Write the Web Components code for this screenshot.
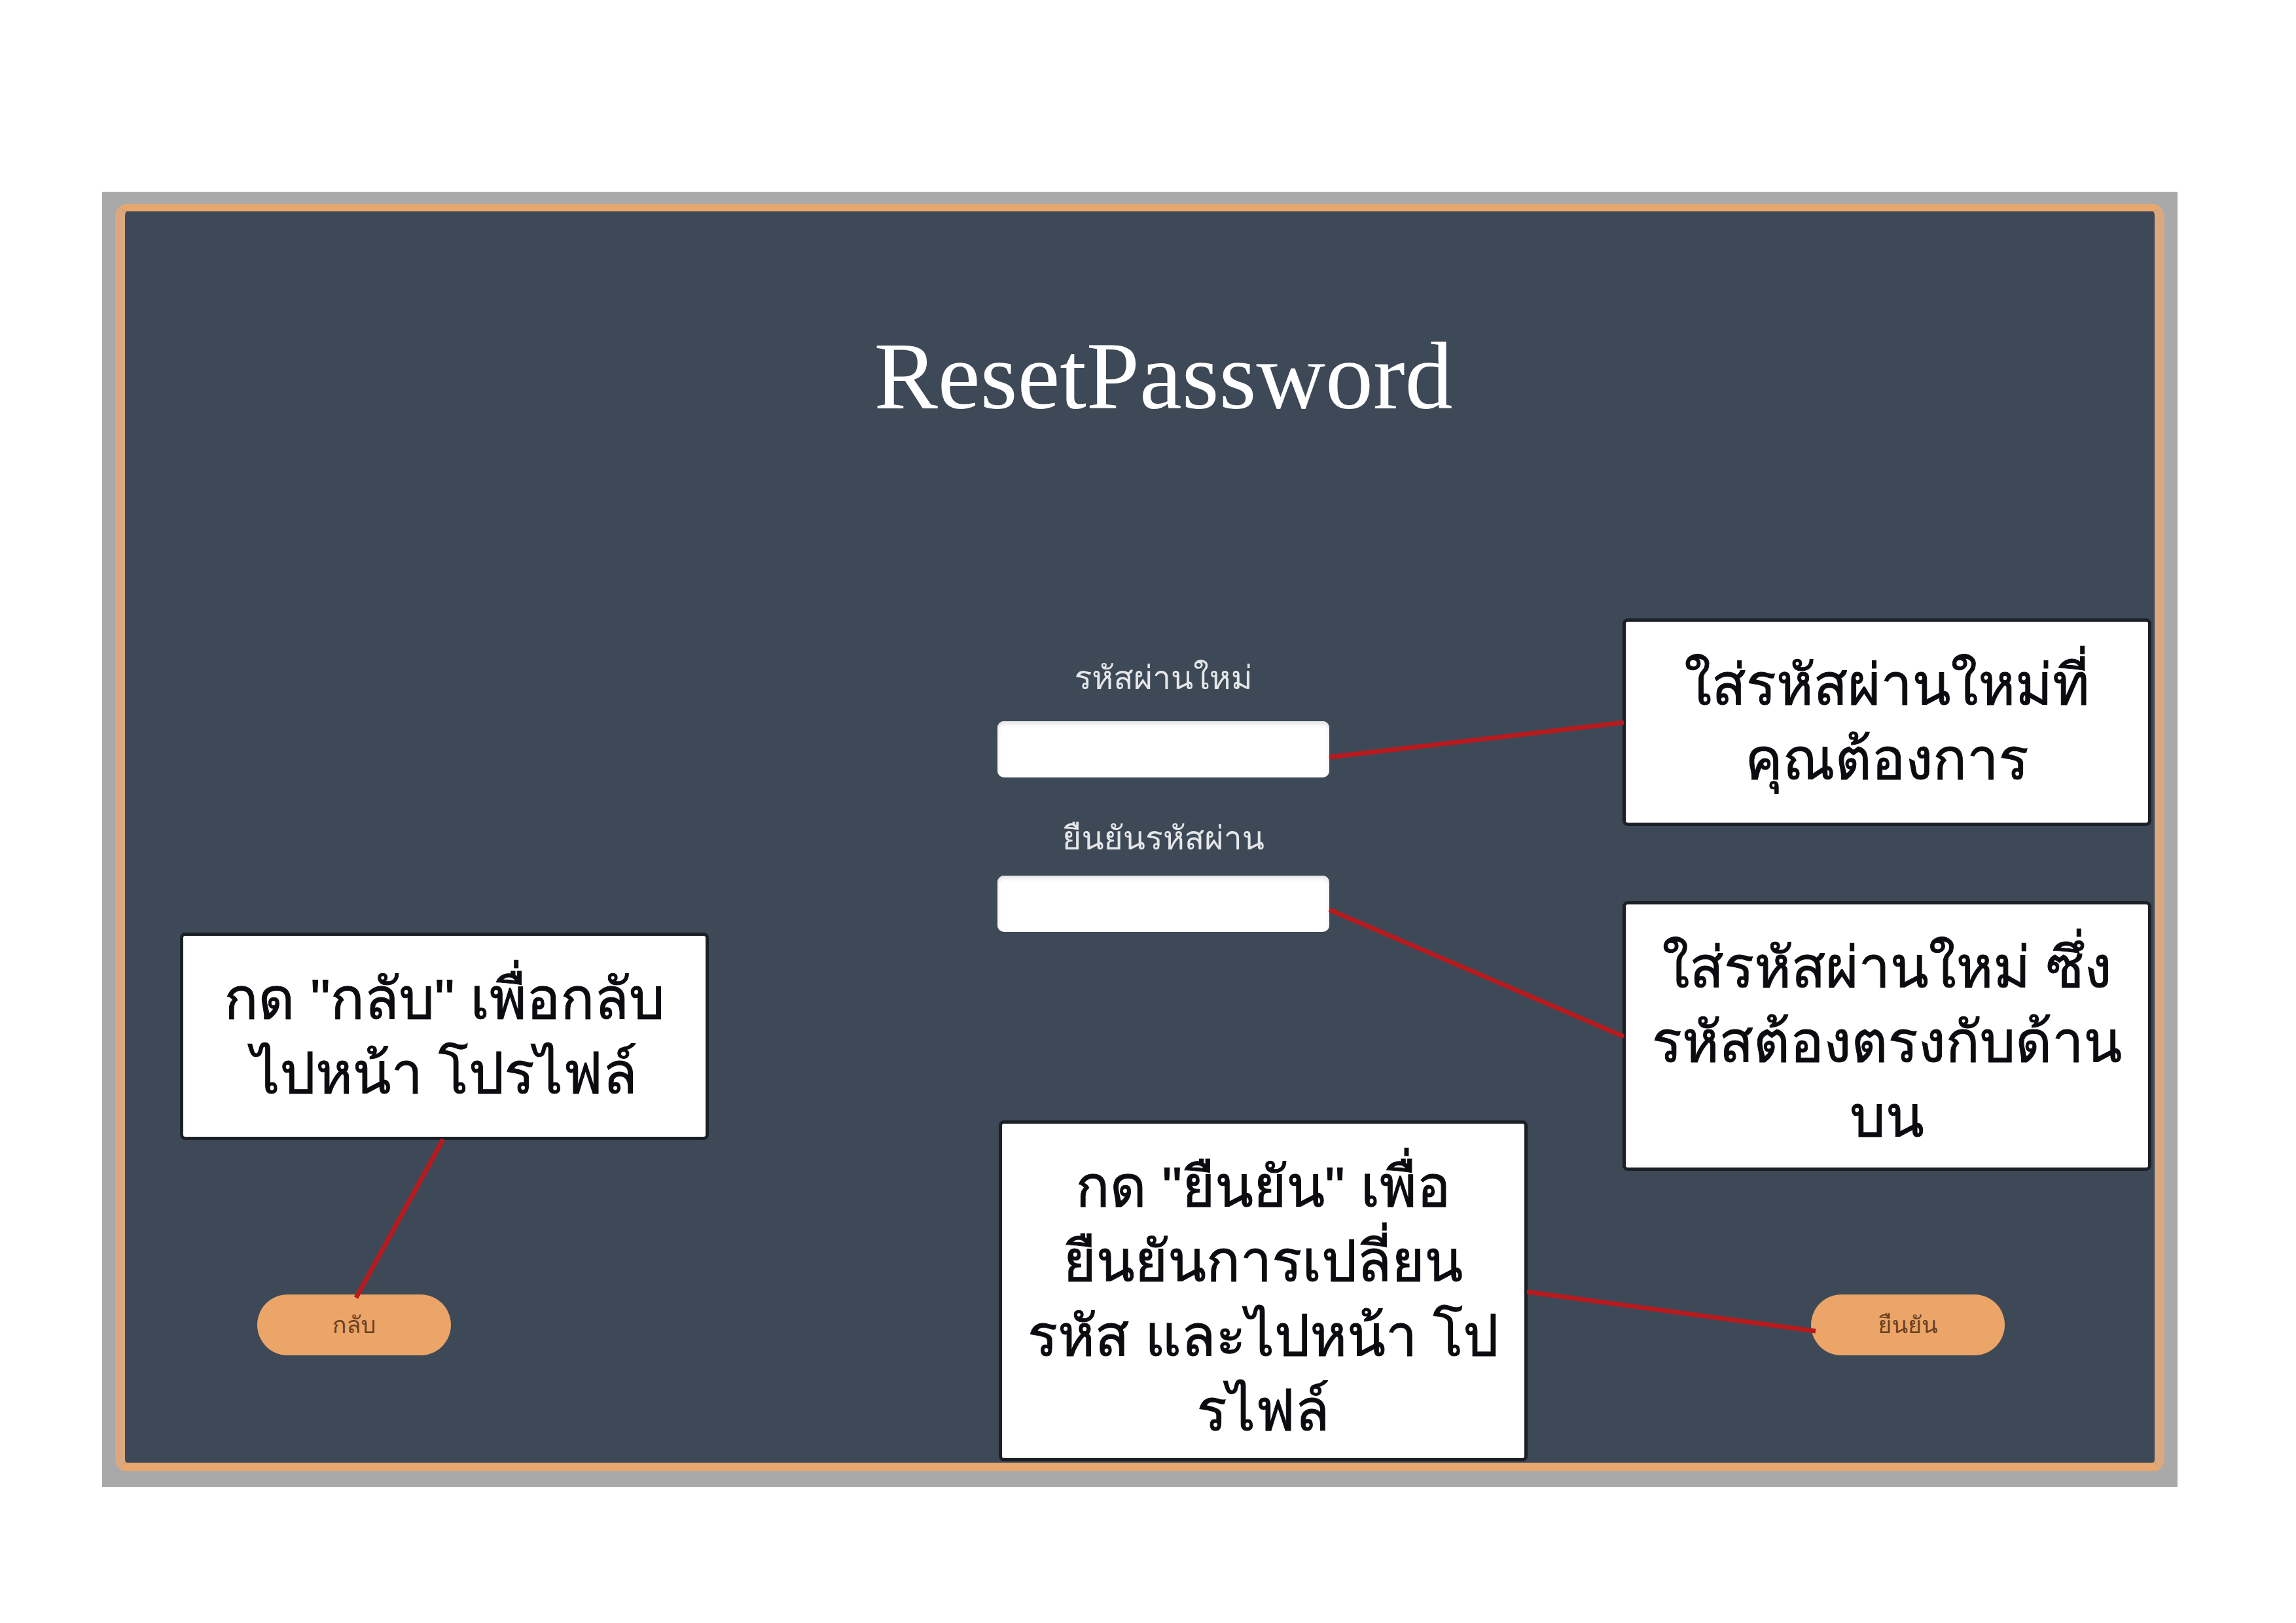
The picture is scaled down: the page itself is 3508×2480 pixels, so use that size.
<!DOCTYPE html>
<html lang="th">
<head>
<meta charset="utf-8">
<title>ResetPassword</title>
<style>
  body { margin: 0; background: #fff; font-family: "Liberation Sans", Loma, Garuda, Waree, "Noto Sans Thai Looped", "Noto Sans Thai", sans-serif; }
</style>
</head>
<body>
<reset-page></reset-page>
<script>
class BaseElement extends HTMLElement {
  constructor() {
    super();
    this.attachShadow({ mode: 'open' }).innerHTML = this.constructor.markup;
  }
}

/* Pill button used in the footer of the form */
customElements.define('pill-button', class extends BaseElement {
  static markup = `
    <style>
      :host { display: block; }
      button {
        display: block; width: 296px; height: 93px; padding: 0; border: 0; border-radius: 47px;
        background: #eba568; color: #6b4020; font: inherit; font-size: 36px; line-height: 48px;
      }
    </style>
    <button type="button"><slot></slot></button>`;
});

/* Label above a password box */
customElements.define('password-field', class extends BaseElement {
  static markup = `
    <style>
      :host { display: flex; flex-direction: column; align-items: center; }
      label { color: #e4e6e8; font-size: 50px; line-height: 76px; margin-bottom: var(--label-gap, 28px); }
      input {
        box-sizing: border-box; width: 507px; height: 86px; padding: 0 24px; border: 0; border-radius: 10px;
        background: #fff; font-size: 48px; box-shadow: inset 0 4px 6px #e2e2e2;
      }
    </style>
    <label for="box"><slot></slot></label>
    <input id="box" type="password">`;
});

/* White explanatory note */
customElements.define('note-callout', class extends BaseElement {
  static markup = `
    <style>
      :host {
        display: block; box-sizing: border-box; width: 808px; padding-top: 39px;
        background: #fff; border: 5px solid #1b2026; border-radius: 8px;
        color: #0c0c10; font-size: 86px; line-height: 114px; text-align: center; white-space: nowrap;
        -webkit-text-stroke: 1px #0c0c10;
      }
    </style>
    <slot></slot>`;
});

customElements.define('reset-page', class extends BaseElement {
  static markup = `
    <style>
      :host { display: block; padding: 293px 181px 208px 156px; }
      .frame { position: relative; padding: 19px 20px 24px; background: #a9a9a9; }
      .panel {
        display: flex; flex-direction: column; box-sizing: border-box; min-height: 1936px;
        border: solid; border-color: #e7a76e #dba880; border-width: 11px 15px 13px; border-radius: 18px;
        background: #3e4957;
      }
      form { display: flex; flex-direction: column; align-items: center; flex: 1; padding: 164px 0 164px 72px; }
      h1 { margin: 0; font: 400 146px/176px "Liberation Serif", serif; color: #fff; }
      .fields { display: flex; flex-direction: column; margin-top: 335px; gap: 55px; }
      .second { --label-gap: 19px; }
      footer { display: flex; justify-content: space-between; align-self: stretch; margin-top: auto; padding: 0 229px 0 130px; }
      svg { position: absolute; inset: 0; width: 100%; height: 100%; }
      note-callout { position: absolute; }
      .back { left: 119px; top: 1132px; height: 317px; }
      .new { right: 40px; top: 652px; height: 317px; }
      .repeat { right: 40px; top: 1084px; height: 412px; }
      .confirm { left: 1370px; top: 1419px; height: 521px; }
    </style>
    <main class="frame">
      <section class="panel">
        <form>
          <h1>ResetPassword</h1>
          <div class="fields">
            <password-field>รหัสผ่านใหม่</password-field>
            <password-field class="second">ยืนยันรหัสผ่าน</password-field>
          </div>
          <footer>
            <pill-button>กลับ</pill-button>
            <pill-button>ยืนยัน</pill-button>
          </footer>
        </form>
      </section>
      <note-callout class="back">กด "กลับ" เพื่อกลับ<br>ไปหน้า โปรไฟล์</note-callout>
      <note-callout class="new">ใส่รหัสผ่านใหม่ที่<br>คุณต้องการ</note-callout>
      <note-callout class="repeat">ใส่รหัสผ่านใหม่ ซึ่ง<br>รหัสต้องตรงกับด้าน<br>บน</note-callout>
      <note-callout class="confirm">กด "ยืนยัน" เพื่อ<br>ยืนยันการเปลี่ยน<br>รหัส และไปหน้า โป<br>รไฟล์</note-callout>
      <svg viewBox="0 0 3171 1979" preserveAspectRatio="none" fill="none" stroke="#b81a1e" stroke-width="7" aria-hidden="true">
        <path d="M1875 864 L2325 811"/>
        <path d="M1875 1097 L2325 1291"/>
        <path d="M521 1448 L388 1690"/>
        <path d="M2177 1681 L2618 1741"/>
      </svg>
    </main>`;
});
</script>
</body>
</html>
